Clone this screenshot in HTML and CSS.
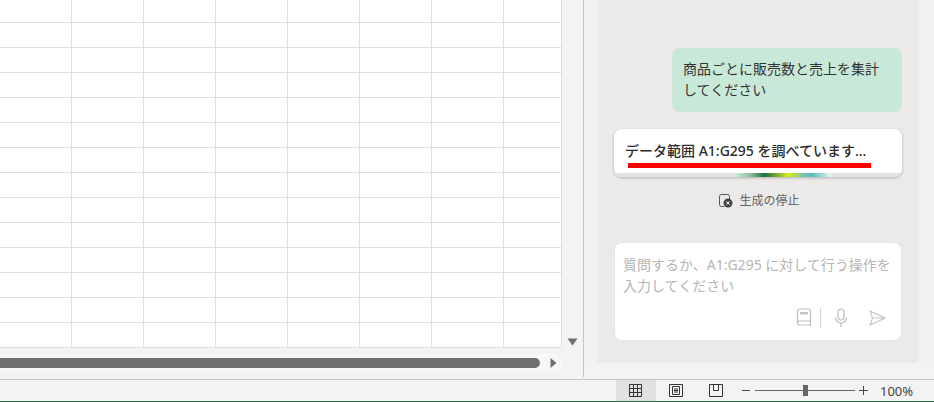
FILE: index.html
```html
<!DOCTYPE html>
<html lang="ja">
<head>
    <meta charset="UTF-8">
    <title>Excel Copilot</title>
    <link rel="stylesheet" href="styles.css">
</head>
<body>
    <div class="app">
        <div class="main">
            <div class="workbook">
                <div class="sheet-row">
                    <div class="sheet"></div>
                    <div class="vscroll">
                        <svg class="arrow-down" width="11" height="8" viewBox="0 0 11 8"><path d="M0.5 0.5h10L5.5 7.5z" fill="#6e6e6e"/></svg>
                    </div>
                </div>
                <div class="hscroll">
                    <div class="hscroll-track">
                        <div class="hscroll-thumb"></div>
                        <svg class="arrow-right" width="7" height="10" viewBox="0 0 7 10"><path d="M0.5 0v10L6.5 5z" fill="#6e6e6e"/></svg>
                    </div>
                </div>
            </div>
            <div class="pane">
                <div class="chat">
                    <div class="bubble">商品ごとに販売数と売上を集計してください</div>
                    <div class="status-card">
                        <div class="status-text">データ範囲 A1:G295 を調べています...</div>
                        <div class="progress"><div class="progress-glow"></div></div>
                        <div class="red-mark"></div>
                    </div>
                    <div class="stop">
                        <svg width="15" height="14" viewBox="0 0 15 14">
                            <path d="M6 12.5H3.5a2 2 0 0 1-2-2v-8a2 2 0 0 1 2-2h6a2 2 0 0 1 2 2V5" fill="none" stroke="#555" stroke-width="1"/>
                            <circle cx="10" cy="9" r="4.5" fill="#444"/>
                            <path d="M8.4 7.4l3.2 3.2M11.6 7.4l-3.2 3.2" stroke="#fff" stroke-width="1"/>
                        </svg>
                        <span>生成の停止</span>
                    </div>
                    <div class="input-box">
                        <div class="placeholder">質問するか、A1:G295 に対して行う操作を入力してください</div>
                        <div class="input-icons">
                            <svg width="16" height="20" viewBox="0 0 16 20">
                                <path d="M1.5 15V3a2 2 0 0 1 2-2h9a2 2 0 0 1 2 2v14h-11a2 2 0 0 1-2-2a2 2 0 0 1 2-2h11" fill="none" stroke="#bdbdbd" stroke-width="1.2"/>
                                <rect x="4" y="4" width="8" height="2.5" fill="#c6c6c6"/>
                            </svg>
                            <div class="icon-sep"></div>
                            <svg class="mic" width="14" height="20" viewBox="0 0 14 20">
                                <rect x="4" y="1" width="6" height="11" rx="3" fill="none" stroke="#bdbdbd" stroke-width="1.2"/>
                                <path d="M1.5 9.5a5.5 5.5 0 0 0 11 0M7 15v4" fill="none" stroke="#bdbdbd" stroke-width="1.2"/>
                            </svg>
                            <svg class="send" width="17" height="16" viewBox="0 0 17 16">
                                <path d="M1 1l15 7-15 7 2.5-7zM3.5 8H16" fill="none" stroke="#c4c4c4" stroke-width="1.1"/>
                            </svg>
                        </div>
                    </div>
                </div>
            </div>
        </div>
        <div class="statusbar">
            <div class="view-btn active">
                <svg class="grid-icon" width="13" height="13" viewBox="0 0 13 13"><path d="M.5.5h12v12H.5zM4.5.5v12M8.5.5v12M.5 4.5h12M.5 8.5h12" fill="none" stroke="#333"/></svg>
            </div>
            <div class="view-btn">
                <svg width="14" height="13" viewBox="0 0 14 13"><path d="M.5.5h13v12H.5zM3.5 2.5h7v8h-7zM5 5h4M5 6.5h4M5 8h4" fill="none" stroke="#333"/></svg>
            </div>
            <div class="view-btn">
                <svg width="14" height="13" viewBox="0 0 14 13"><path d="M.5.5h13v12H.5zM4.5.5v6h5v-6" fill="none" stroke="#333"/></svg>
            </div>
            <div class="zoom">
                <svg width="9" height="9" viewBox="0 0 9 9"><path d="M0 4.5h8" stroke="#444"/></svg>
                <div class="zoom-track"><div class="zoom-thumb"></div></div>
                <svg width="9" height="9" viewBox="0 0 9 9"><path d="M0 4.5h9M4.5 0v9" stroke="#444"/></svg>
            </div>
            <div class="zoom-value">100%</div>
        </div>
    </div>
</body>
</html>
```

FILE: styles.css
```css
* {
    box-sizing: border-box;
}
html, body {
    margin: 0;
    padding: 0;
    overflow: hidden;
}
body {
    font-family: "Noto Sans", "Noto Sans CJK JP", sans-serif;
    background: #f3f3f3;
}
.app {
    width: 934px;
    height: 402px;
    display: flex;
    flex-direction: column;
    border-bottom: 1px solid #217346;
}
.main {
    height: 379px;
    display: flex;
}
.workbook {
    width: 584px;
    height: 377px;
    border-right: 1px solid #c4c4c4;
    display: flex;
    flex-direction: column;
}
.sheet-row {
    display: flex;
    height: 348px;
}
.sheet {
    width: 562px;
    background-color: #fff;
    background-image:
        repeating-linear-gradient(to bottom, transparent 0, transparent 22px, #dfdfdf 22px, #dfdfdf 23px, transparent 23px, transparent 25px),
        repeating-linear-gradient(to right, transparent 0, transparent 71px, #dfdfdf 71px, #dfdfdf 72px);
    background-size: 100% 25px, 72px 100%;
    border-right: 1px solid #dfdfdf;
    border-bottom: 1px solid #dfdfdf;
}
.vscroll {
    flex: 1;
    display: flex;
    justify-content: center;
    align-items: flex-end;
    padding-bottom: 2px;
    background: #f3f3f3;
}
.hscroll {
    height: 29px;
    padding-top: 6px;
}
.hscroll-track {
    width: 562px;
    height: 17px;
    background: #f7f7f7;
    border-radius: 0 8px 8px 0;
    display: flex;
    align-items: center;
    padding-right: 5px;
}
.hscroll-thumb {
    width: 542px;
    height: 10px;
    background: #6f6f6f;
    border-radius: 0 5px 5px 0;
}
.arrow-right {
    margin-left: 10px;
}
.pane {
    flex: 1;
    padding: 0 16px 0 14px;
    background: #f1f1f1;
    height: 363px;
}
.chat {
    height: 363px;
    background: #ebeae8;
    padding: 48px 16px 0;
    display: flex;
    flex-direction: column;
    align-items: flex-end;
}
.bubble {
    width: 230px;
    height: 64px;
    padding: 10px 11px;
    background: #c9e9d8;
    border-radius: 8px;
    font-size: 14px;
    line-height: 21px;
    color: #333;
}
.status-card {
    position: relative;
    width: 288px;
    height: 48px;
    margin-top: 17px;
    background: #fff;
    border-radius: 8px;
    box-shadow: 0 1px 3px rgba(0, 0, 0, 0.25);
    overflow: hidden;
}
.status-text {
    padding: 11px 12px 0 11px;
    font-size: 14px;
    line-height: 21px;
    font-weight: 500;
    color: #2b2b2b;
    white-space: nowrap;
}
.progress {
    position: absolute;
    left: 0;
    right: 0;
    bottom: 0;
    height: 4px;
    background: #e2e2e2;
}
.progress-glow {
    width: 95px;
    height: 4px;
    margin-left: 122px;
    background: linear-gradient(to right, #cfeadd, #8cc0a0 15%, #17713f 30%, #8fb52a 45%, #d8ee1a 55%, #6cc4b8 72%, #59bcc0 80%, #e8f3f2);
}
.red-mark {
    position: absolute;
    left: 14px;
    top: 34px;
    width: 243px;
    height: 5px;
    background: #ff0000;
}
.stop {
    align-self: center;
    display: flex;
    align-items: center;
    gap: 6px;
    margin-top: 15px;
    margin-left: 2px;
    font-size: 12px;
    line-height: 18px;
    color: #616161;
}
.input-box {
    width: 288px;
    height: 99px;
    margin-top: 32px;
    padding: 11px 8px 0;
    background: #fff;
    border: 1px solid #e4e4e4;
    border-radius: 8px;
    display: flex;
    flex-direction: column;
    justify-content: space-between;
}
.placeholder {
    font-size: 14px;
    line-height: 21px;
    color: #b5b5b5;
}
.input-icons {
    display: flex;
    justify-content: flex-end;
    align-items: center;
    height: 20px;
    margin-bottom: 12px;
    padding-right: 7px;
}
.icon-sep {
    width: 1px;
    height: 20px;
    margin: 0 13px 0 8px;
    background: #d6d6d6;
}
.send {
    margin-left: 21px;
}
.statusbar {
    height: 22px;
    border-top: 1px solid #c8c8c8;
    background: #f3f3f3;
    padding-left: 616px;
    display: flex;
    align-items: center;
}
.view-btn {
    width: 40px;
    height: 21px;
    display: flex;
    align-items: center;
    justify-content: center;
}
.view-btn.active {
    background: #e1e1e1;
}
.grid-icon {
    margin-right: 1px;
}
.zoom {
    display: flex;
    align-items: center;
    margin-left: 6px;
    gap: 4px;
}
.zoom-track {
    position: relative;
    width: 100px;
    height: 1px;
    background: #6a6a6a;
}
.zoom-thumb {
    position: absolute;
    left: 48px;
    top: -5px;
    width: 5px;
    height: 11px;
    background: #666;
}
.zoom-value {
    margin-left: 12px;
    font-family: "Noto Sans", sans-serif;
    font-size: 13px;
    color: #444;
}
```
